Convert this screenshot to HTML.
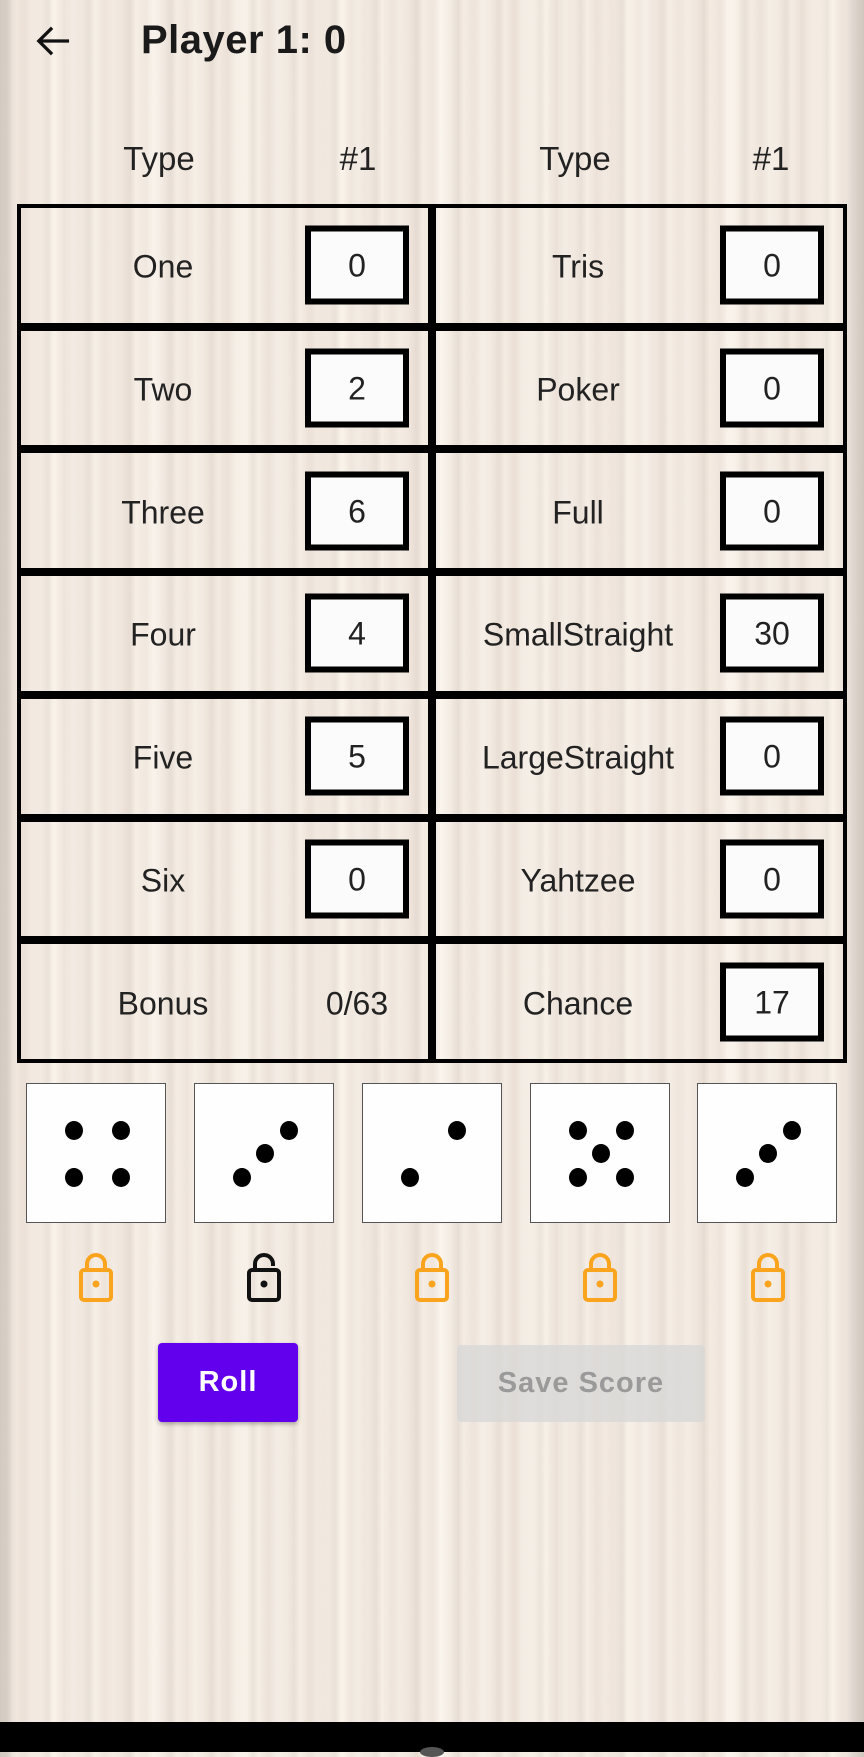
<!DOCTYPE html>
<html><head><meta charset="utf-8"><style>
*{margin:0;padding:0;box-sizing:border-box}
body{width:864px;height:1752px;position:relative;overflow:hidden;font-family:"Liberation Sans",Arial,sans-serif;color:#222;
background:
linear-gradient(90deg,rgba(150,140,135,.35) 0,rgba(150,140,135,.15) 10px,rgba(0,0,0,0) 18px,rgba(0,0,0,0) 846px,rgba(150,140,135,.2) 852px,rgba(150,140,135,.35) 864px),
repeating-linear-gradient(90deg,rgba(215,205,195,.0) 0,rgba(215,205,195,.35) 7px,rgba(255,250,240,.3) 13px,rgba(225,210,200,.25) 23px,rgba(255,255,250,.2) 31px,rgba(215,205,195,0) 41px),
repeating-linear-gradient(90deg,rgba(230,218,205,.0) 0,rgba(230,215,205,.4) 29px,rgba(255,252,245,.4) 53px,rgba(230,218,210,.3) 71px,rgba(255,255,250,0) 97px),
#f3ebe2;}
.abs{position:absolute}
.title{left:141px;top:18px;font-size:40px;font-weight:bold;color:#1a1a1a;letter-spacing:0.5px}
.hdr{top:140px;font-size:33px;width:160px;text-align:center;margin-left:-80px}
.table{left:17px;top:204px;width:830px;height:859px;display:grid;grid-template-columns:1fr 1fr;grid-template-rows:repeat(7,1fr)}
.cell{border:4px solid #000;position:relative}
.lbl{position:absolute;left:0;width:284px;top:50%;transform:translateY(-45%);text-align:center;font-size:32px}
.box{position:absolute;right:19px;top:50%;transform:translateY(-50%);width:104px;height:79px;border:6px solid #000;background:#fcfbfb;font-size:32px;text-align:center;line-height:69px}
.plain{position:absolute;right:19px;width:104px;top:50%;transform:translateY(-45%);font-size:32px;text-align:center}
.die{top:1083px;width:140px;height:140px;background:#fefefe;border:1.5px solid #555}
.pip{position:absolute;width:18px;height:19px;border-radius:50%;background:#000;margin:-10px 0 0 -9px}
.lock{top:1252px;width:34px;height:50px}
.btn{position:absolute;border-radius:4px;text-align:center;font-weight:bold;font-size:29px;letter-spacing:1px}
</style></head><body>
<svg class="abs" style="left:35px;top:24px" width="36" height="34" viewBox="0 0 38 36"><path d="M36 18H5M18 4L4 18l14 14" fill="none" stroke="#111" stroke-width="3.5"/></svg>
<div class="abs title">Player 1: 0</div>
<div class="abs hdr" style="left:159px">Type</div>
<div class="abs hdr" style="left:358px">#1</div>
<div class="abs hdr" style="left:575px">Type</div>
<div class="abs hdr" style="left:771px">#1</div>
<div class="abs table">
<div class="cell"><div class="lbl">One</div><div class="box">0</div></div>
<div class="cell"><div class="lbl">Tris</div><div class="box">0</div></div>
<div class="cell"><div class="lbl">Two</div><div class="box">2</div></div>
<div class="cell"><div class="lbl">Poker</div><div class="box">0</div></div>
<div class="cell"><div class="lbl">Three</div><div class="box">6</div></div>
<div class="cell"><div class="lbl">Full</div><div class="box">0</div></div>
<div class="cell"><div class="lbl">Four</div><div class="box">4</div></div>
<div class="cell"><div class="lbl">SmallStraight</div><div class="box">30</div></div>
<div class="cell"><div class="lbl">Five</div><div class="box">5</div></div>
<div class="cell"><div class="lbl">LargeStraight</div><div class="box">0</div></div>
<div class="cell"><div class="lbl">Six</div><div class="box">0</div></div>
<div class="cell"><div class="lbl">Yahtzee</div><div class="box">0</div></div>
<div class="cell"><div class="lbl">Bonus</div><div class="plain">0/63</div></div>
<div class="cell"><div class="lbl">Chance</div><div class="box">17</div></div>
</div>
<div class="abs die" style="left:26px"><i class="pip" style="left:47px;top:47px"></i><i class="pip" style="left:94px;top:47px"></i><i class="pip" style="left:47px;top:94px"></i><i class="pip" style="left:94px;top:94px"></i></div>
<div class="abs die" style="left:194px"><i class="pip" style="left:94px;top:47px"></i><i class="pip" style="left:70px;top:70px"></i><i class="pip" style="left:47px;top:94px"></i></div>
<div class="abs die" style="left:362px"><i class="pip" style="left:94px;top:47px"></i><i class="pip" style="left:47px;top:94px"></i></div>
<div class="abs die" style="left:530px"><i class="pip" style="left:47px;top:47px"></i><i class="pip" style="left:94px;top:47px"></i><i class="pip" style="left:70px;top:70px"></i><i class="pip" style="left:47px;top:94px"></i><i class="pip" style="left:94px;top:94px"></i></div>
<div class="abs die" style="left:697px"><i class="pip" style="left:94px;top:47px"></i><i class="pip" style="left:70px;top:70px"></i><i class="pip" style="left:47px;top:94px"></i></div>
<svg class="abs lock" style="left:79px" viewBox="0 0 34 50"><path d="M8 18V12a9 9 0 0 1 18 0V18" fill="none" stroke="#f9a41c" stroke-width="4"/><rect x="2" y="18" width="30" height="30" rx="3" fill="none" stroke="#f9a41c" stroke-width="4"/><circle cx="17" cy="32" r="3.5" fill="#f9a41c"/></svg>
<svg class="abs lock" style="left:247px" viewBox="0 0 34 50"><path d="M8 18V12a9 9 0 0 1 18 0V14" fill="none" stroke="#111" stroke-width="4"/><rect x="2" y="18" width="30" height="30" rx="3" fill="none" stroke="#111" stroke-width="4"/><circle cx="17" cy="32" r="3.5" fill="#111"/></svg>
<svg class="abs lock" style="left:415px" viewBox="0 0 34 50"><path d="M8 18V12a9 9 0 0 1 18 0V18" fill="none" stroke="#f9a41c" stroke-width="4"/><rect x="2" y="18" width="30" height="30" rx="3" fill="none" stroke="#f9a41c" stroke-width="4"/><circle cx="17" cy="32" r="3.5" fill="#f9a41c"/></svg>
<svg class="abs lock" style="left:583px" viewBox="0 0 34 50"><path d="M8 18V12a9 9 0 0 1 18 0V18" fill="none" stroke="#f9a41c" stroke-width="4"/><rect x="2" y="18" width="30" height="30" rx="3" fill="none" stroke="#f9a41c" stroke-width="4"/><circle cx="17" cy="32" r="3.5" fill="#f9a41c"/></svg>
<svg class="abs lock" style="left:751px" viewBox="0 0 34 50"><path d="M8 18V12a9 9 0 0 1 18 0V18" fill="none" stroke="#f9a41c" stroke-width="4"/><rect x="2" y="18" width="30" height="30" rx="3" fill="none" stroke="#f9a41c" stroke-width="4"/><circle cx="17" cy="32" r="3.5" fill="#f9a41c"/></svg>
<div class="btn" style="left:158px;top:1343px;width:140px;height:79px;line-height:79px;background:#6200ee;color:#fff;box-shadow:0 2px 4px rgba(0,0,0,.3)">Roll</div>
<div class="btn" style="left:457px;top:1345px;width:248px;height:77px;line-height:77px;background:rgba(215,215,215,.75);color:#9a9a9a">Save Score</div>
<div class="abs" style="left:0;top:1722px;width:864px;height:30px;background:#000"></div>
<div class="abs" style="left:420px;top:1747px;width:24px;height:10px;border-radius:50%;background:#555"></div>
</body></html>
